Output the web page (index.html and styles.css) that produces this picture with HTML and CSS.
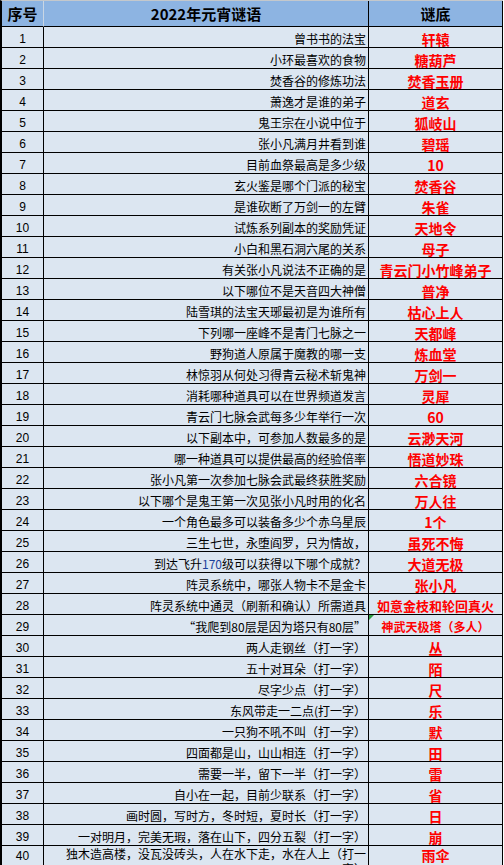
FILE: index.html
```html
<!DOCTYPE html>
<html lang="zh-CN">
<head>
<meta charset="utf-8">
<title>2022年元宵谜语</title>
<link rel="stylesheet" href="styles.css">
</head>
<body>
<div class="sheet">
  <div class="row head">
    <div class="c no">序号</div>
    <div class="c q hq">2022年元宵谜语</div>
    <div class="c a">谜底</div>
  </div>
  <div class="row"><div class="c no">1</div><div class="c q">曾书书的法宝</div><div class="c a">轩辕</div></div>
  <div class="row"><div class="c no">2</div><div class="c q">小环最喜欢的食物</div><div class="c a">糖葫芦</div></div>
  <div class="row"><div class="c no">3</div><div class="c q">焚香谷的修炼功法</div><div class="c a">焚香玉册</div></div>
  <div class="row"><div class="c no">4</div><div class="c q">萧逸才是谁的弟子</div><div class="c a">道玄</div></div>
  <div class="row"><div class="c no">5</div><div class="c q">鬼王宗在小说中位于</div><div class="c a">狐岐山</div></div>
  <div class="row"><div class="c no">6</div><div class="c q">张小凡满月井看到谁</div><div class="c a">碧瑶</div></div>
  <div class="row"><div class="c no">7</div><div class="c q">目前血祭最高是多少级</div><div class="c a">10</div></div>
  <div class="row"><div class="c no">8</div><div class="c q">玄火鉴是哪个门派的秘宝</div><div class="c a">焚香谷</div></div>
  <div class="row"><div class="c no">9</div><div class="c q">是谁砍断了万剑一的左臂</div><div class="c a">朱雀</div></div>
  <div class="row"><div class="c no">10</div><div class="c q">试炼系列副本的奖励凭证</div><div class="c a">天地令</div></div>
  <div class="row"><div class="c no">11</div><div class="c q">小白和黑石洞六尾的关系</div><div class="c a">母子</div></div>
  <div class="row"><div class="c no">12</div><div class="c q">有关张小凡说法不正确的是</div><div class="c a">青云门小竹峰弟子</div></div>
  <div class="row"><div class="c no">13</div><div class="c q">以下哪位不是天音四大神僧</div><div class="c a">普净</div></div>
  <div class="row"><div class="c no">14</div><div class="c q">陆雪琪的法宝天琊最初是为谁所有</div><div class="c a">枯心上人</div></div>
  <div class="row"><div class="c no">15</div><div class="c q">下列哪一座峰不是青门七脉之一</div><div class="c a">天都峰</div></div>
  <div class="row"><div class="c no">16</div><div class="c q">野狗道人原属于魔教的哪一支</div><div class="c a">炼血堂</div></div>
  <div class="row"><div class="c no">17</div><div class="c q">林惊羽从何处习得青云秘术斩鬼神</div><div class="c a">万剑一</div></div>
  <div class="row"><div class="c no">18</div><div class="c q">消耗哪种道具可以在世界频道发言</div><div class="c a">灵犀</div></div>
  <div class="row"><div class="c no">19</div><div class="c q">青云门七脉会武每多少年举行一次</div><div class="c a">60</div></div>
  <div class="row"><div class="c no">20</div><div class="c q">以下副本中，可参加人数最多的是</div><div class="c a">云渺天河</div></div>
  <div class="row"><div class="c no">21</div><div class="c q">哪一种道具可以提供最高的经验倍率</div><div class="c a">悟道妙珠</div></div>
  <div class="row"><div class="c no">22</div><div class="c q">张小凡第一次参加七脉会武最终获胜奖励</div><div class="c a">六合镜</div></div>
  <div class="row"><div class="c no">23</div><div class="c q">以下哪个是鬼王第一次见张小凡时用的化名</div><div class="c a">万人往</div></div>
  <div class="row"><div class="c no">24</div><div class="c q">一个角色最多可以装备多少个赤乌星辰</div><div class="c a">1个</div></div>
  <div class="row"><div class="c no">25</div><div class="c q">三生七世，永堕阎罗，只为情故，</div><div class="c a">虽死不悔</div></div>
  <div class="row"><div class="c no">26</div><div class="c q">到达飞升<span class="blue">170</span>级可以获得以下哪个成就？</div><div class="c a">大道无极</div></div>
  <div class="row"><div class="c no">27</div><div class="c q">阵灵系统中，哪张人物卡不是金卡</div><div class="c a">张小凡</div></div>
  <div class="row"><div class="c no">28</div><div class="c q">阵灵系统中通灵（刷新和确认）所需道具</div><div class="c a a13">如意金枝和轮回真火</div></div>
  <div class="row"><div class="c no">29</div><div class="c q">“我爬到80层是因为塔只有80层”</div><div class="c a a12 flag">神武天极塔（多人）</div></div>
  <div class="row"><div class="c no">30</div><div class="c q">两人走钢丝（打一字）</div><div class="c a"><span class="ul">丛</span></div></div>
  <div class="row"><div class="c no">31</div><div class="c q">五十对耳朵（打一字）</div><div class="c a">陌</div></div>
  <div class="row"><div class="c no">32</div><div class="c q">尽字少点（打一字）</div><div class="c a">尺</div></div>
  <div class="row"><div class="c no">33</div><div class="c q">东风带走一二点(打一字）</div><div class="c a">乐</div></div>
  <div class="row"><div class="c no">34</div><div class="c q">一只狗不吼不叫（打一字）</div><div class="c a">默</div></div>
  <div class="row"><div class="c no">35</div><div class="c q">四面都是山，山山相连（打一字）</div><div class="c a">田</div></div>
  <div class="row"><div class="c no">36</div><div class="c q">需要一半，留下一半（打一字）</div><div class="c a">雷</div></div>
  <div class="row"><div class="c no">37</div><div class="c q">自小在一起，目前少联系（打一字）</div><div class="c a">省</div></div>
  <div class="row"><div class="c no">38</div><div class="c q">画时圆，写时方，冬时短，夏时长（打一字）</div><div class="c a">日</div></div>
  <div class="row"><div class="c no">39</div><div class="c q">一对明月，完美无瑕，落在山下，四分五裂（打一字）</div><div class="c a">崩</div></div>
  <div class="row tall"><div class="c no">40</div><div class="c q">独木造高楼，没瓦没砖头，人在水下走，水在人上（打一<br>字）</div><div class="c a">雨伞</div></div>
</div>
</body>
</html>
```

FILE: styles.css
```css
html, body {
  margin: 0;
  padding: 0;
  background: #ffffff;
}

body {
  font-family: "Noto Sans CJK SC", "Noto Sans", sans-serif;
  color: #000000;
}

.sheet {
  width: 501px;
  border-left: 2px solid #000000;
  border-top: 1px solid #c4c8cc;
}

.row {
  display: grid;
  grid-template-columns: 42px 325px 134px;
}

.c {
  box-sizing: border-box;
  height: 21px;
  border-right: 1px solid #000000;
  border-bottom: 1px solid #000000;
  background: #dce6f1;
  display: flex;
  align-items: center;
  padding-top: 3px;
  white-space: nowrap;
  overflow: hidden;
}

.no {
  justify-content: center;
  font-family: "Liberation Sans", "Noto Sans", sans-serif;
  font-size: 12px;
  line-height: 14px;
}

.q {
  justify-content: flex-end;
  padding-right: 2px;
  font-size: 12px;
  line-height: 14px;
  text-align: right;
}

.a {
  justify-content: center;
  color: #ff0000;
  font-weight: bold;
  font-size: 14px;
  line-height: 16px;
}

.a13 { font-size: 13px; }
.a12 { font-size: 12px; }

.blue { color: #1d3f9a; }

.ul {
  text-decoration: underline;
  text-underline-offset: 2px;
}

.flag { position: relative; }
.flag::before {
  content: "";
  position: absolute;
  top: 0;
  left: 0;
  width: 0;
  height: 0;
  border-top: 5px solid #2f9e44;
  border-right: 5px solid transparent;
}

/* header */
.head .c {
  height: 26px;
  padding-top: 1px;
  background: #8db4e2;
  font-family: "Noto Sans CJK SC", "Noto Sans", sans-serif;
  font-weight: bold;
  font-size: 15px;
  line-height: 18px;
  color: #000000;
}
.head .no { border-right-color: #c9d6e4; }
.head .hq { justify-content: center; padding-right: 0; }

/* last, wrapped row */
.tall .c {
  height: 34px;
  align-items: flex-start;
  padding-top: 0;
}
.tall .q {
  white-space: normal;
  line-height: 15px;
}
.tall .no { padding-top: 3px; }
.tall .a { padding-top: 1px; }
```
